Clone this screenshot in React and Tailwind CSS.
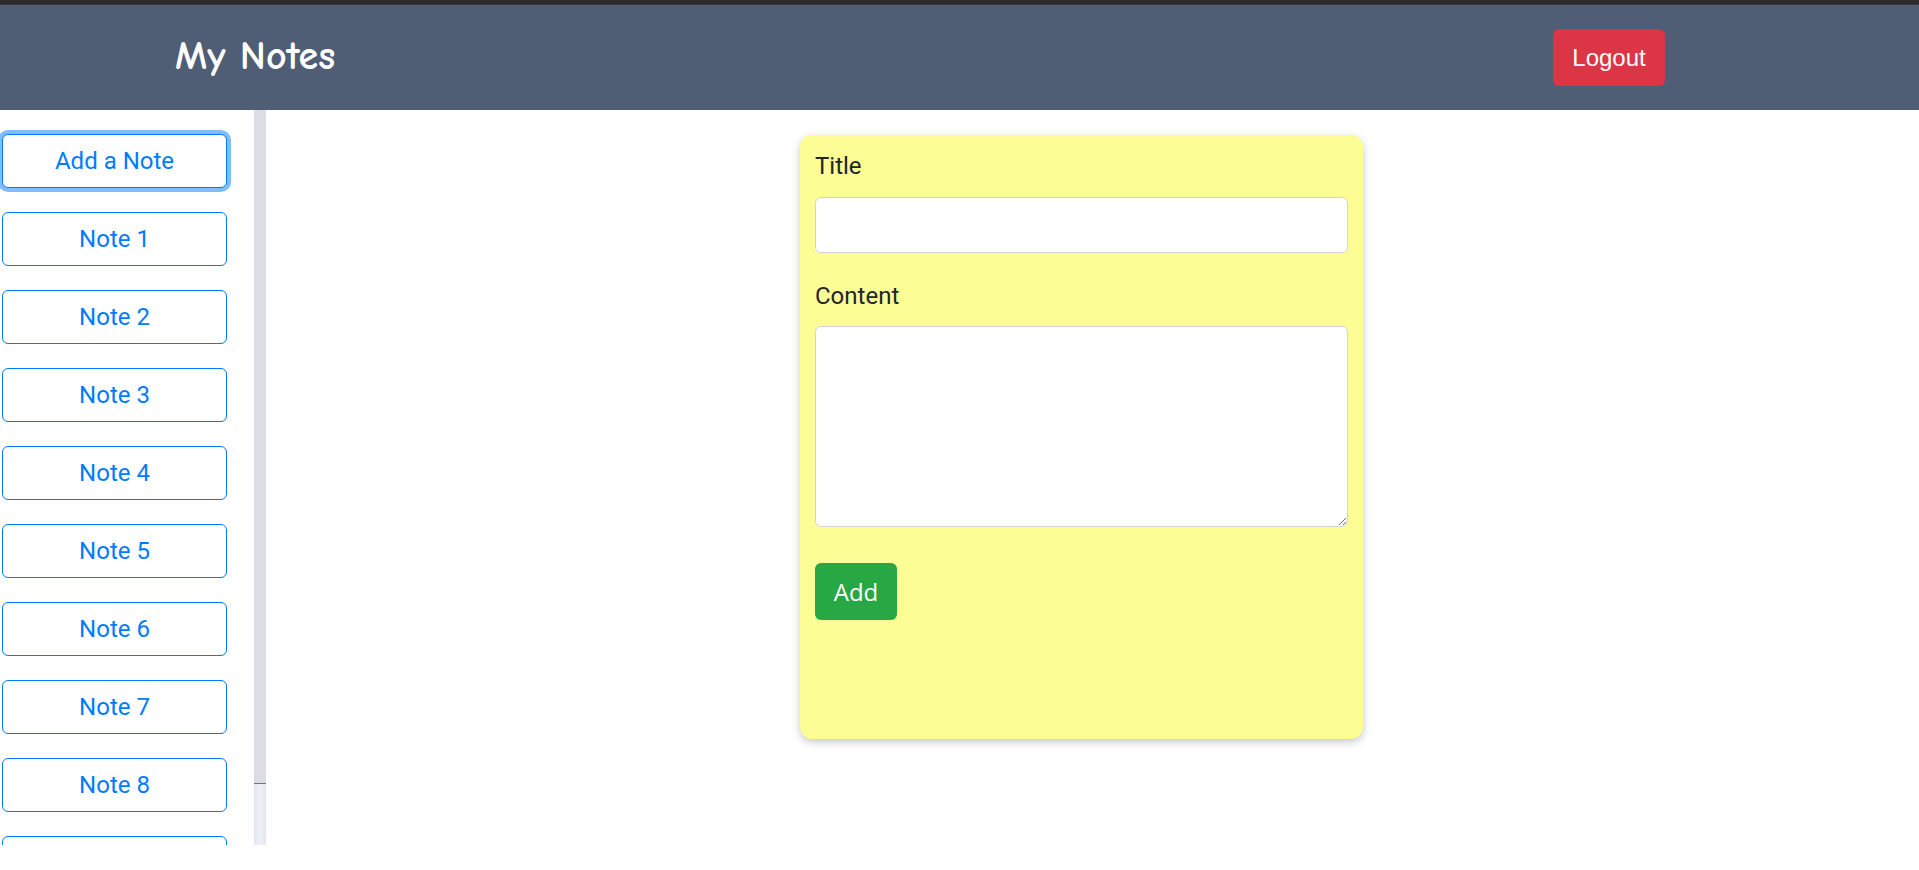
import React from "react";

const notes = ["Note 1", "Note 2", "Note 3", "Note 4", "Note 5", "Note 6", "Note 7", "Note 8", "Note 9"];

export default function App() {
  return (
    <div className="min-h-screen bg-white flex flex-col font-['Roboto',sans-serif]">
      {/* window strip */}
      <div className="h-[5px] bg-[#2b2b2b] border-b border-[#3a3a3a]" />

      {/* header */}
      <header className="h-[105px] bg-[#4f5d75] flex items-center justify-between pl-[175px] pr-[254px]">
        <h1 className="text-white text-[40px] font-bold font-['Comic_Sans_MS','Comic_Neue',cursive] leading-none pb-[4px]">
          My Notes
        </h1>
        <button className="h-[57px] w-[112px] rounded-[6px] bg-[#dc3545] text-white text-[24px] font-['Liberation_Sans',Arial,sans-serif]">
          Logout
        </button>
      </header>

      <div className="flex">
        {/* sidebar */}
        <aside className="flex h-[735px] shrink-0">
          <div className="w-[254px] overflow-hidden">
            <div className="flex flex-col gap-[24px] pt-[24px] pl-[2px] pb-[24px]">
              <button className="w-[225px] h-[54px] shrink-0 rounded-[6px] border border-[#007bff] bg-white text-[#007bff] text-[24px] shadow-[0_0_0_4px_rgba(0,123,255,0.5)]">
                Add a Note
              </button>
              {notes.map(n => (
                <button
                  key={n}
                  className="w-[225px] h-[54px] shrink-0 rounded-[6px] border border-[#007bff] bg-white text-[#007bff] text-[24px]"
                >
                  {n}
                </button>
              ))}
            </div>
          </div>
          {/* scrollbar */}
          <div className="w-[12px] flex flex-col bg-gradient-to-r from-[#e4e6f2] via-[#eef0f7] to-[#e4e6f2]">
            <div className="h-[674px] bg-[#dcdce6] border-b border-[#6b7a8a]" />
          </div>
        </aside>

        {/* main */}
        <main className="flex-1 pt-[25px]">
          <div className="ml-[534px] w-[563px] h-[604px] rounded-[12px] bg-[#fdfd96] shadow-[0_3px_8px_rgba(0,0,0,0.22)] px-[15px] pt-[13px] text-[#212529]">
            <label className="block text-[24px] leading-[36px] mb-[13px]">Title</label>
            <input
              type="text"
              className="block w-full h-[56px] rounded-[6px] border border-[#ced4da] bg-white outline-none"
            />
            <label className="block text-[24px] leading-[36px] mt-[25px] mb-[12px]">Content</label>
            <textarea className="block w-full h-[201px] rounded-[6px] border border-[#ced4da] bg-white outline-none" />
            <button className="mt-[36px] h-[57px] w-[82px] rounded-[6px] bg-[#28a745] text-white text-[24px] font-['Open_Sans',sans-serif]">
              Add
            </button>
          </div>
        </main>
      </div>
    </div>
  );
}
